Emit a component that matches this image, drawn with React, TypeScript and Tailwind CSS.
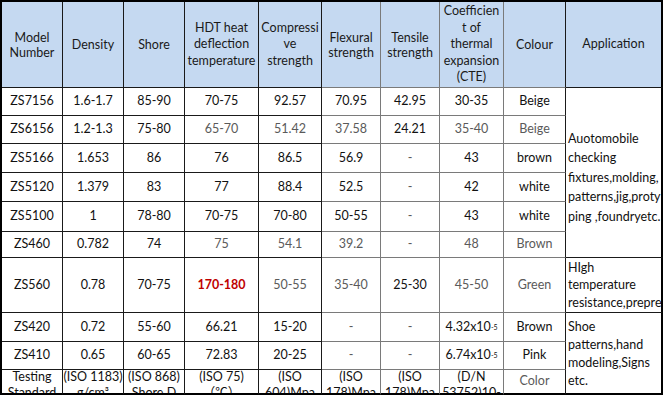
import React from "react";

type Cell = { t: React.ReactNode; g?: boolean; r?: boolean };

const colBorder = [
  "border-r-[#1a1a1a] border-b-[#1a1a1a]",
  "border-r-[#1a1a1a] border-b-[#1a1a1a]",
  "border-r-[#1a1a1a] border-b-[#1a1a1a]",
  "border-r-[#1a1a1a] border-b-[#1a1a1a]",
  "border-r-[#1a1a1a] border-b-[#1a1a1a]",
  "border-r-[#7a7a7a] border-b-[#7a7a7a]",
  "border-r-[#7a7a7a] border-b-[#7a7a7a]",
  "border-r-[#7a7a7a] border-b-[#7a7a7a]",
  "border-r-[#1a1a1a] border-b-[#7a7a7a]",
];

const S = (a: string, b: string) => (
  <span>
    {a}
    <sup className="text-[7px] relative -top-[1px]">{b}</sup>
  </span>
);

const rows: Cell[][] = [
  [{ t: "ZS7156" }, { t: "1.6-1.7" }, { t: "85-90" }, { t: "70-75" }, { t: "92.57" }, { t: "70.95" }, { t: "42.95" }, { t: "30-35" }, { t: "Beige" }],
  [{ t: "ZS6156" }, { t: "1.2-1.3" }, { t: "75-80" }, { t: "65-70", g: true }, { t: "51.42", g: true }, { t: "37.58", g: true }, { t: "24.21" }, { t: "35-40", g: true }, { t: "Beige", g: true }],
  [{ t: "ZS5166" }, { t: "1.653" }, { t: "86" }, { t: "76" }, { t: "86.5" }, { t: "56.9" }, { t: "-", g: true }, { t: "43" }, { t: "brown" }],
  [{ t: "ZS5120" }, { t: "1.379" }, { t: "83" }, { t: "77" }, { t: "88.4" }, { t: "52.5" }, { t: "-", g: true }, { t: "42" }, { t: "white" }],
  [{ t: "ZS5100" }, { t: "1" }, { t: "78-80" }, { t: "70-75" }, { t: "70-80" }, { t: "50-55" }, { t: "-", g: true }, { t: "43" }, { t: "white" }],
  [{ t: "ZS460" }, { t: "0.782" }, { t: "74" }, { t: "75", g: true }, { t: "54.1", g: true }, { t: "39.2", g: true }, { t: "-", g: true }, { t: "48", g: true }, { t: "Brown", g: true }],
  [{ t: "ZS560" }, { t: "0.78" }, { t: "70-75" }, { t: "170-180", r: true }, { t: "50-55", g: true }, { t: "35-40", g: true }, { t: "25-30" }, { t: "45-50", g: true }, { t: "Green", g: true }],
  [{ t: "ZS420" }, { t: "0.72" }, { t: "55-60" }, { t: "66.21" }, { t: "15-20" }, { t: "-", g: true }, { t: "-", g: true }, { t: S("4.32x10", "-5") }, { t: "Brown" }],
  [{ t: "ZS410" }, { t: "0.65" }, { t: "60-65" }, { t: "72.83" }, { t: "20-25" }, { t: "-", g: true }, { t: "-", g: true }, { t: S("6.74x10", "-5") }, { t: "Pink" }],
];

const testing: string[][] = [
  ["Testing", "Standard"],
  ["(ISO 1183)", "g/cm³"],
  ["(ISO 868)", "Shore D"],
  ["(ISO 75)", "（℃）"],
  ["(ISO", "604)Mpa"],
  ["(ISO", "178)Mpa"],
  ["(ISO", "178)Mpa"],
  ["(D/N", "53752)10-"],
];

const headers: string[][] = [
  ["Model", "Number"],
  ["Density"],
  ["Shore"],
  ["HDT heat", "deflection", "temperature"],
  ["Compressi", "ve", "strength"],
  ["Flexural", "strength"],
  ["Tensile", "strength"],
  ["Coefficien", "t of", "thermal", "expansion", "(CTE)"],
  ["Colour"],
];

const rowStart = ["row-start-2", "row-start-3", "row-start-4", "row-start-5", "row-start-6", "row-start-7", "row-start-8", "row-start-9", "row-start-10"];
const colStart = ["col-start-1", "col-start-2", "col-start-3", "col-start-4", "col-start-5", "col-start-6", "col-start-7", "col-start-8", "col-start-9"];

export default function App() {
  return (
    <div className="w-[664px] h-[400px] bg-white" style={{ fontFamily: "Lato, 'Noto Sans CJK SC', sans-serif" }}>
      <div className="grid w-[663px] grid-cols-[61px_61px_61px_74px_63px_59px_59px_64px_62px_97px] grid-rows-[86px_28px_28px_29px_29px_30px_26px_55px_29px_28px_25px] border-l-2 border-t-2 border-black text-[12.5px] text-[#111]">
        {headers.map((h, i) => (
          <div
            key={"h" + i}
            className={`row-start-1 ${colStart[i]} flex flex-col items-center justify-center text-center bg-[#c5d9f1] border-r border-b ${colBorder[i]} ${h.length > 2 ? "leading-[16.5px]" : "leading-[15px]"} text-[#1a1a1a]`}
          >
            {h.map((l, k) => (
              <span key={k} className="whitespace-nowrap">{l}</span>
            ))}
          </div>
        ))}
        <div className="row-start-1 col-start-10 flex items-center justify-center bg-[#c5d9f1] border-r-2 border-b border-r-black border-b-[#1a1a1a] text-[#1a1a1a]">
          Application
        </div>

        {rows.map((row, ri) =>
          row.map((c, ci) => (
            <div
              key={ri + "-" + ci}
              className={`${rowStart[ri]} ${colStart[ci]} flex items-center justify-center text-center whitespace-nowrap overflow-hidden border-r border-b ${colBorder[ci]} ${
                c.r ? "text-[#c00000] font-bold" : c.g ? "text-[#5a5a5a]" : ""
              }`}
            >
              {c.t}
            </div>
          ))
        )}

        {testing.map((l, i) => (
          <div
            key={"t" + i}
            className={`row-start-11 ${colStart[i]} overflow-hidden text-center border-r border-b-2 ${colBorder[i].split(" ")[0]} border-b-black leading-[16px]`}
          >
            <div className="flex flex-col items-center -mt-[1px]">
              <span className="whitespace-nowrap">{l[0]}</span>
              <span className="whitespace-nowrap">{l[1]}</span>
            </div>
          </div>
        ))}
        <div className="row-start-11 col-start-9 flex items-center justify-center overflow-hidden border-r border-b-2 border-r-[#1a1a1a] border-b-black text-[#5a5a5a]">
          Color
        </div>

        <div className="row-start-2 row-end-8 col-start-10 flex flex-col justify-center pl-[2px] pt-[10px] leading-[19.5px] border-r-2 border-b border-r-black border-b-[#1a1a1a] overflow-hidden whitespace-nowrap">
          <span>Auotomobile</span>
          <span>checking</span>
          <span>fixtures,molding,</span>
          <span>patterns,jig,proty</span>
          <span>ping ,foundryetc.</span>
        </div>
        <div className="row-start-8 row-end-9 col-start-10 flex flex-col justify-center pl-[2px] leading-[17.5px] border-r-2 border-b border-r-black border-b-[#1a1a1a] overflow-hidden whitespace-nowrap">
          <span>HIgh</span>
          <span>temperature</span>
          <span>resistance,prepreg</span>
        </div>
        <div className="row-start-9 row-end-12 col-start-10 flex flex-col justify-center pl-[2px] pt-[2px] leading-[18px] border-r-2 border-b-2 border-black overflow-hidden whitespace-nowrap">
          <span>Shoe</span>
          <span>patterns,hand</span>
          <span>modeling,Signs</span>
          <span>etc.</span>
        </div>
      </div>
    </div>
  );
}
